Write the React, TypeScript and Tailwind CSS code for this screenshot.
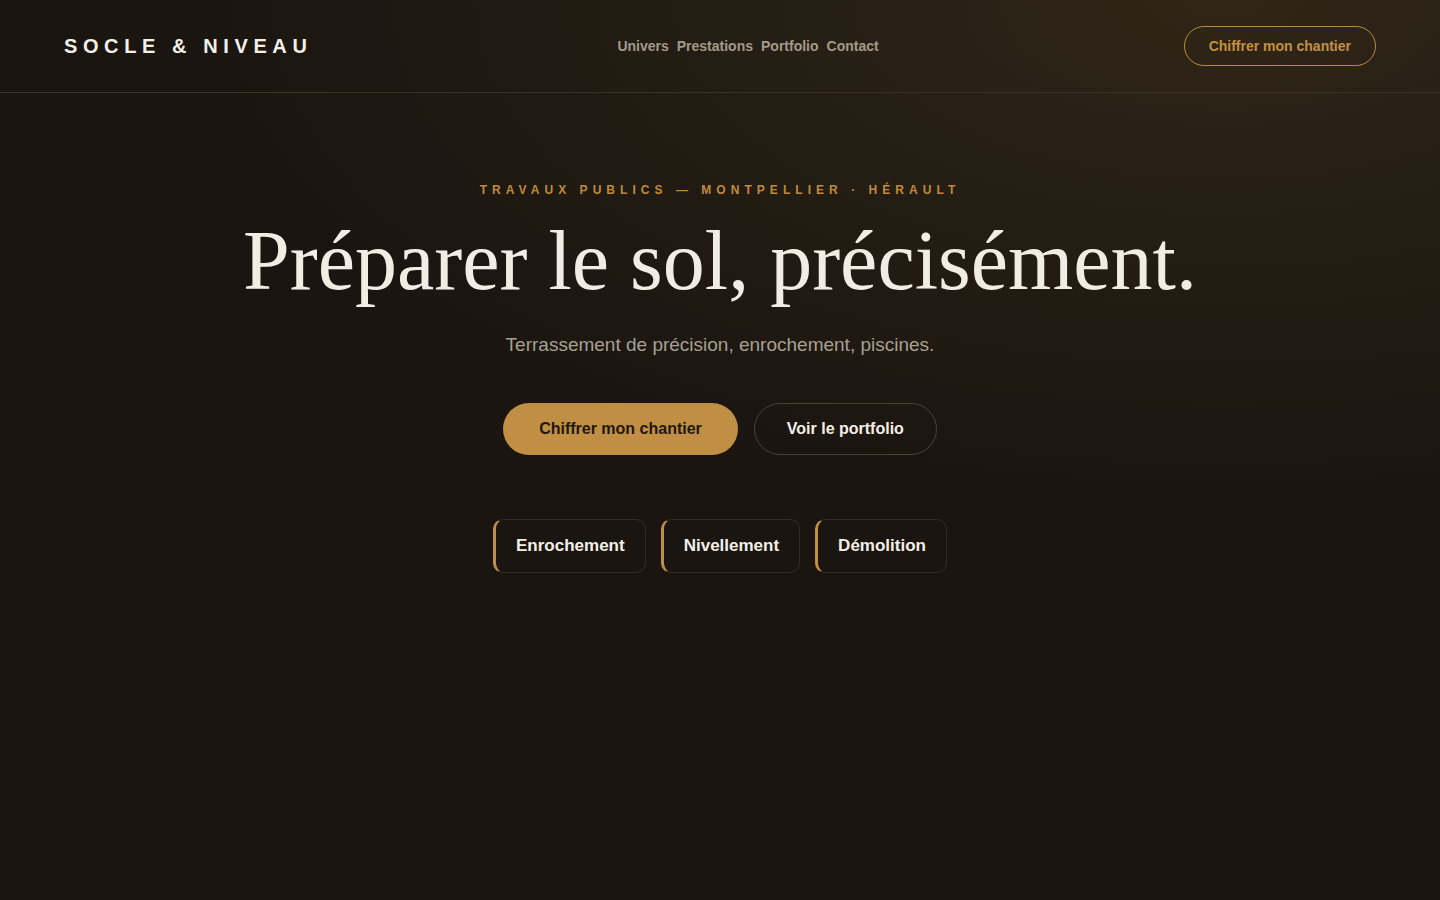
export default function App() {
  const nav = ["Univers", "Prestations", "Portfolio", "Contact"];
  const chips = ["Enrochement", "Nivellement", "Démolition"];

  return (
    <div
      className="min-h-[900px] w-full bg-[#1a1510] text-[#f1ede4]"
      style={{
        backgroundImage:
          "radial-gradient(ellipse 90% 70% at 85% 0%, #2f2617 0%, #231c13 45%, #1a1510 80%)",
        fontFamily: '"Liberation Sans", Arial, sans-serif',
      }}
    >
      <header className="flex h-[93px] items-center justify-between border-b border-[#3a3024] px-16">
        <div className="text-[20px] font-bold tracking-[0.28em] text-[#f4f0e8]">
          SOCLE &amp; NIVEAU
        </div>
        <nav className="flex gap-2 text-[14px] font-bold text-[#a39a8a]">
          {nav.map((item) => (
            <a key={item} href="#">
              {item}
            </a>
          ))}
        </nav>
        <button
          type="button"
          className="h-10 rounded-full border border-[#b98a40] px-6 text-[14px] font-bold text-[#c4903f]"
        >
          Chiffrer mon chantier
        </button>
      </header>

      <main className="flex flex-col items-center pt-[88px]">
        <p className="text-[12px] font-bold tracking-[0.42em] text-[#c08a3e]">
          TRAVAUX PUBLICS — MONTPELLIER · HÉRAULT
        </p>
        <h1
          className="mt-4 text-[84px] leading-[1.1] text-[#f1ede4]"
          style={{ fontFamily: '"Liberation Serif", Georgia, serif' }}
        >
          Préparer le sol, précisément.
        </h1>
        <p className="mt-6 text-[19px] text-[#a8a092]">
          Terrassement de précision, enrochement, piscines.
        </p>

        <div className="mt-[43px] flex gap-4">
          <button
            type="button"
            className="h-[52px] rounded-full bg-[#c08f44] px-9 text-[16px] font-bold text-[#1f170e]"
          >
            Chiffrer mon chantier
          </button>
          <button
            type="button"
            className="h-[52px] rounded-full border border-[#4a4237] px-8 text-[16px] font-bold text-[#f4f0e8]"
          >
            Voir le portfolio
          </button>
        </div>

        <div className="mt-16 flex gap-[15px]">
          {chips.map((chip) => (
            <div
              key={chip}
              className="flex h-[54px] items-center rounded-[10px] border border-[#342c22] border-l-[3px] border-l-[#c08f44] bg-[#1a1510]/60 px-5 text-[17px] font-bold text-[#f4f0e8]"
            >
              {chip}
            </div>
          ))}
        </div>
      </main>
    </div>
  );
}
